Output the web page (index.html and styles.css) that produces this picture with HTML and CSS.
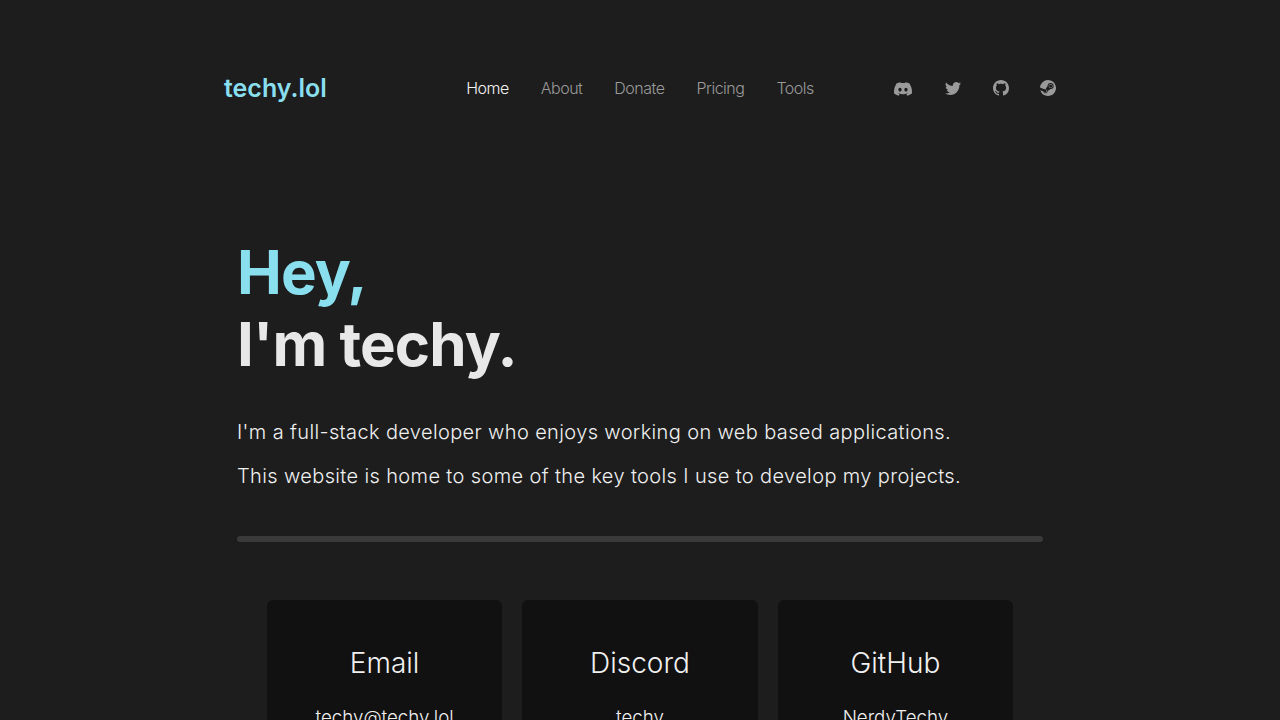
FILE: index.html
```html
<!DOCTYPE html>
<html lang="en">
<head>
    <meta charset="UTF-8">
    <meta name="viewport" content="width=device-width, initial-scale=1.0">
    <link rel="stylesheet" href="styles.css">
    <title>techy.lol</title>
</head>
<body>

    <nav class="navbar">
        <a class="brand" href="#">techy.lol</a>
        <div class="nav-links">
            <a class="active" href="#">Home</a>
            <a href="#">About</a>
            <a href="#">Donate</a>
            <a href="#">Pricing</a>
            <a href="#">Tools</a>
        </div>
        <div class="nav-icons">
            <a href="#" class="icon-discord"><svg viewBox="0 0 16 16" fill="currentColor"><path d="M13.545 2.907a13.227 13.227 0 0 0-3.257-1.011.05.05 0 0 0-.052.025c-.141.25-.297.577-.406.833a12.19 12.19 0 0 0-3.658 0 8.258 8.258 0 0 0-.412-.833.051.051 0 0 0-.052-.025c-1.125.194-2.22.534-3.257 1.011a.041.041 0 0 0-.021.018C.356 6.024-.213 9.047.066 12.032c.001.014.01.028.021.037a13.276 13.276 0 0 0 3.995 2.02.05.05 0 0 0 .056-.019c.308-.42.582-.863.818-1.329a.05.05 0 0 0-.01-.059.051.051 0 0 0-.018-.011 8.875 8.875 0 0 1-1.248-.595.05.05 0 0 1-.02-.066.051.051 0 0 1 .015-.019c.084-.063.168-.129.248-.195a.05.05 0 0 1 .051-.007c2.619 1.196 5.454 1.196 8.041 0a.052.052 0 0 1 .053.007c.08.066.164.132.248.195a.051.051 0 0 1-.004.085 8.254 8.254 0 0 1-1.249.594.05.05 0 0 0-.03.03.052.052 0 0 0 .003.041c.24.465.515.909.817 1.329a.05.05 0 0 0 .056.019 13.235 13.235 0 0 0 4.001-2.02.049.049 0 0 0 .021-.037c.334-3.451-.559-6.449-2.366-9.106a.034.034 0 0 0-.02-.019Zm-8.198 7.307c-.789 0-1.438-.724-1.438-1.612 0-.889.637-1.613 1.438-1.613.807 0 1.45.73 1.438 1.613 0 .888-.637 1.612-1.438 1.612Zm5.316 0c-.788 0-1.438-.724-1.438-1.612 0-.889.637-1.613 1.438-1.613.807 0 1.451.73 1.438 1.613 0 .888-.631 1.612-1.438 1.612Z"/></svg></a>
            <a href="#"><svg viewBox="0 0 16 16" fill="currentColor"><path d="M5.026 15c6.038 0 9.341-5.003 9.341-9.334 0-.14 0-.282-.006-.422A6.685 6.685 0 0 0 16 3.542a6.658 6.658 0 0 1-1.889.518 3.301 3.301 0 0 0 1.447-1.817 6.533 6.533 0 0 1-2.087.793A3.286 3.286 0 0 0 7.875 6.03a9.325 9.325 0 0 1-6.767-3.429 3.289 3.289 0 0 0 1.018 4.382A3.323 3.323 0 0 1 .64 6.575v.045a3.288 3.288 0 0 0 2.632 3.218 3.203 3.203 0 0 1-.865.115 3.23 3.23 0 0 1-.614-.057 3.283 3.283 0 0 0 3.067 2.277A6.588 6.588 0 0 1 .78 13.58a6.32 6.32 0 0 1-.78-.045A9.344 9.344 0 0 0 5.026 15z"/></svg></a>
            <a href="#" class="icon-github"><svg viewBox="0 0 16 16" fill="currentColor"><path d="M8 0C3.58 0 0 3.58 0 8c0 3.54 2.29 6.53 5.47 7.59.4.07.55-.17.55-.38 0-.19-.01-.82-.01-1.49-2.01.37-2.53-.49-2.69-.94-.09-.23-.48-.94-.82-1.13-.28-.15-.68-.52-.01-.53.63-.01 1.08.58 1.23.82.72 1.21 1.87.87 2.33.66.07-.52.28-.87.51-1.07-1.78-.2-3.64-.89-3.64-3.95 0-.87.31-1.59.82-2.15-.08-.2-.36-1.02.08-2.12 0 0 .67-.21 2.2.82.64-.18 1.32-.27 2-.27.68 0 1.36.09 2 .27 1.53-1.04 2.2-.82 2.2-.82.44 1.1.16 1.92.08 2.12.51.56.82 1.27.82 2.15 0 3.07-1.87 3.75-3.65 3.95.29.25.54.73.54 1.48 0 1.07-.01 1.93-.01 2.2 0 .21.15.46.55.38A8.012 8.012 0 0 0 16 8c0-4.42-3.58-8-8-8z"/></svg></a>
            <a href="#"><svg viewBox="0 0 16 16" fill="currentColor"><path d="M.329 10.333A8.01 8.01 0 0 0 7.99 16C12.414 16 16 12.418 16 8s-3.586-8-8.009-8A8.006 8.006 0 0 0 0 7.468l.003.006 4.304 1.769A2.198 2.198 0 0 1 5.62 8.88l1.96-2.844-.001-.04a3.046 3.046 0 0 1 3.042-3.043 3.046 3.046 0 0 1 3.042 3.043 3.047 3.047 0 0 1-3.111 3.044l-2.804 2a2.223 2.223 0 0 1-3.075 2.11 2.217 2.217 0 0 1-1.312-1.568L.33 10.333Z"/><path d="M4.868 12.683a1.715 1.715 0 0 0 1.318-3.165 1.705 1.705 0 0 0-1.263-.02l1.023.424a1.261 1.261 0 1 1-.97 2.33l-.99-.41a1.7 1.7 0 0 0 .882.84Zm3.726-6.687a2.03 2.03 0 0 0 2.027 2.029 2.03 2.03 0 0 0 2.027-2.029 2.03 2.03 0 0 0-2.027-2.027 2.03 2.03 0 0 0-2.027 2.027Zm2.03-1.527a1.524 1.524 0 1 1-.002 3.048 1.524 1.524 0 0 1 .002-3.048Z"/></svg></a>
        </div>
    </nav>

    <main class="content">
        <h1 class="hero-title"><span class="accent">Hey,</span><br>I'm techy.</h1>
        <p class="hero-text">I'm a full-stack developer who enjoys working on web based applications.</p>
        <p class="hero-text">This website is home to some of the key tools I use to develop my projects.</p>
        <hr class="divider">

        <section class="cards">
            <div class="card">
                <h3>Email</h3>
                <p>techy@techy.lol</p>
            </div>
            <div class="card">
                <h3>Discord</h3>
                <p>techy</p>
            </div>
            <div class="card">
                <h3>GitHub</h3>
                <p>NerdyTechy</p>
            </div>
        </section>
    </main>

</body>
</html>
```

FILE: styles.css
```css
body {
    margin: 0;
    font-family: 'Inter', sans-serif;
    background-color: #1d1d1d;
    color: #e8e8e8;
}
a {
    text-decoration: none;
    color: inherit;
}
.navbar {
    width: 832px;
    margin: 0 auto;
    padding-top: 72px;
    display: grid;
    grid-template-columns: 1fr auto 1fr;
    align-items: center;
    height: 32px;
}
.brand {
    font-size: 25px;
    font-weight: 600;
    color: #8adfef;
}
.nav-links {
    display: flex;
    gap: 32px;
    font-size: 16px;
    font-weight: 300;
    letter-spacing: -0.5px;
    color: #9a9a9a;
}
.nav-links .active {
    color: #f4f4f4;
}
.nav-icons {
    display: flex;
    justify-content: flex-end;
    gap: 32px;
    padding-top: 1px;
    color: #9a9a9a;
}
.nav-icons a {
    display: flex;
}
.nav-icons svg {
    width: 16px;
    height: 16px;
}
.nav-icons .icon-discord svg {
    width: 18px;
    height: 18px;
}
.icon-discord {
    margin-right: 1px;
}
.icon-github {
    margin-right: -1px;
}
.content {
    width: 806px;
    margin: 0 auto;
    padding-top: 132px;
}
.hero-title {
    margin: 0 0 40px;
    font-size: 60px;
    line-height: 72px;
    font-weight: 700;
    letter-spacing: -0.9px;
    color: #e8e8e8;
}
.accent {
    color: #8adfef;
}
.hero-text {
    margin: 0 0 20px;
    font-size: 20px;
    line-height: 24px;
    font-weight: 300;
    letter-spacing: 0.37px;
    color: #f0f0f0;
}
.divider {
    margin: 48px 0 58px;
    height: 6px;
    border: 0;
    border-radius: 3px;
    background-color: #3a3a3a;
}
.cards {
    display: flex;
    justify-content: center;
    gap: 20.2px;
}
.card {
    width: 235.2px;
    padding: 44px 0;
    background-color: #111;
    border-radius: 6px;
    text-align: center;
}
.card h3 {
    margin: 0 0 24px;
    font-size: 28px;
    line-height: 38px;
    font-weight: 300;
    color: #f0f0f0;
}
.card p {
    margin: 0;
    font-size: 18.72px;
    font-weight: 300;
    color: #f0f0f0;
}
```
